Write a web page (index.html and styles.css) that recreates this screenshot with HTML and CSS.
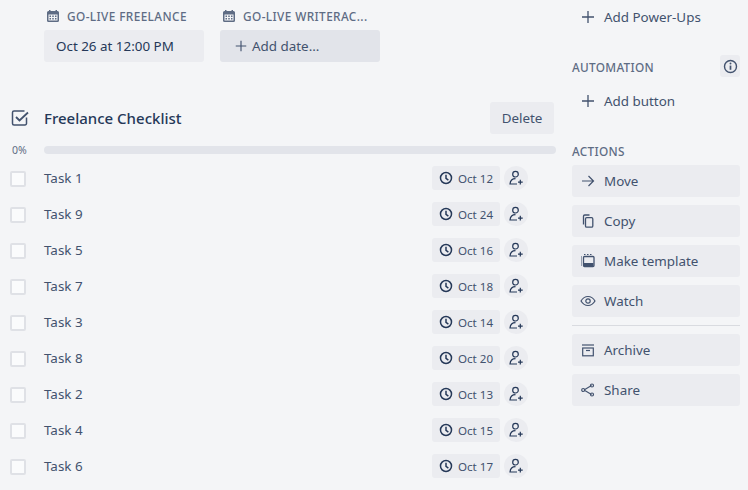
FILE: index.html
```html
<!DOCTYPE html>
<html lang="en">
<head>
<meta charset="utf-8">
<title>Card</title>
<link rel="stylesheet" href="styles.css">
</head>
<body>
<svg class="defs" width="0" height="0" aria-hidden="true">
  <symbol id="plus" viewBox="0 0 16 16"><path d="M8 2v12M2 8h12" fill="none" stroke="currentColor" stroke-width="1.3"/></symbol>
  <symbol id="cal" viewBox="0 0 14 14"><path fill="currentColor" fill-rule="evenodd" d="M3 1h1.500v1h5V1H11v1h.5A1.500 1.500 0 0 1 13 3.500v8a1.500 1.500 0 0 1-1.500 1.500h-9A1.500 1.500 0 0 1 1 11.500v-8A1.500 1.500 0 0 1 2.500 2H3zM2.500 5.500v6h9v-6zM3.500 6.500h1.500v1.500H3.500zM6.250 6.500h1.500v1.500h-1.500zM9 6.500h1.500v1.500H9zM3.500 9h1.500v1.500H3.500zM6.250 9h1.500v1.500h-1.500zM9 9h1.500v1.500H9z"/></symbol>
  <symbol id="clock" viewBox="0 0 16 16"><circle cx="8" cy="8" r="6.300" fill="none" stroke="currentColor" stroke-width="1.700"/><path d="M8 4.200v4.200l2.700 2" fill="none" stroke="currentColor" stroke-width="1.700"/></symbol>
  <symbol id="assign" viewBox="0 0 16 16"><path d="M10.300 4.200a2.800 2.800 0 1 1-5.600 0 2.800 2.800 0 0 1 5.600 0zM7.500 8.700c-3 0-5.200 2-5.500 5.300h7" fill="none" stroke="currentColor" stroke-width="1.200"/><path d="M12.300 9.800v4.700M10 12.200h4.700" fill="none" stroke="currentColor" stroke-width="1.200"/></symbol>
</svg>
<div class="page">
  <main class="main">
    <div class="dates">
      <div class="date-col">
        <div class="date-label"><svg class="cal"><use href="#cal"/></svg><span>GO-LIVE FREELANCE</span></div>
        <div class="date-btn">Oct 26 at 12:00 PM</div>
      </div>
      <div class="date-col">
        <div class="date-label"><svg class="cal"><use href="#cal"/></svg><span>GO-LIVE WRITERAC...</span></div>
        <div class="date-btn add"><svg class="plus-sm"><use href="#plus"/></svg>Add date...</div>
      </div>
    </div>

    <section class="checklist">
      <header class="cl-head">
        <svg class="cl-icon" viewBox="0 0 18 18"><path d="M15.500 8.500v6a1.500 1.500 0 0 1-1.500 1.500H3a1.500 1.500 0 0 1-1.500-1.500V3.500A1.500 1.500 0 0 1 3 2h10.500" fill="none" stroke="currentColor" stroke-width="1.500"/><path d="M5 8l3.500 3.500L17 3.500" fill="none" stroke="currentColor" stroke-width="1.800"/></svg>
        <h2 class="cl-title">Freelance Checklist</h2>
        <button class="delete">Delete</button>
      </header>
      <div class="progress"><span class="pct">0%</span><div class="bar"></div></div>
      <ul class="tasks">
        <li class="task"><span class="box"></span><span class="task-name">Task 1</span><span class="chip"><svg class="clock"><use href="#clock"/></svg>Oct 12</span><span class="assign"><svg class="assign-i"><use href="#assign"/></svg></span></li>
        <li class="task"><span class="box"></span><span class="task-name">Task 9</span><span class="chip"><svg class="clock"><use href="#clock"/></svg>Oct 24</span><span class="assign"><svg class="assign-i"><use href="#assign"/></svg></span></li>
        <li class="task"><span class="box"></span><span class="task-name">Task 5</span><span class="chip"><svg class="clock"><use href="#clock"/></svg>Oct 16</span><span class="assign"><svg class="assign-i"><use href="#assign"/></svg></span></li>
        <li class="task"><span class="box"></span><span class="task-name">Task 7</span><span class="chip"><svg class="clock"><use href="#clock"/></svg>Oct 18</span><span class="assign"><svg class="assign-i"><use href="#assign"/></svg></span></li>
        <li class="task"><span class="box"></span><span class="task-name">Task 3</span><span class="chip"><svg class="clock"><use href="#clock"/></svg>Oct 14</span><span class="assign"><svg class="assign-i"><use href="#assign"/></svg></span></li>
        <li class="task"><span class="box"></span><span class="task-name">Task 8</span><span class="chip"><svg class="clock"><use href="#clock"/></svg>Oct 20</span><span class="assign"><svg class="assign-i"><use href="#assign"/></svg></span></li>
        <li class="task"><span class="box"></span><span class="task-name">Task 2</span><span class="chip"><svg class="clock"><use href="#clock"/></svg>Oct 13</span><span class="assign"><svg class="assign-i"><use href="#assign"/></svg></span></li>
        <li class="task"><span class="box"></span><span class="task-name">Task 4</span><span class="chip"><svg class="clock"><use href="#clock"/></svg>Oct 15</span><span class="assign"><svg class="assign-i"><use href="#assign"/></svg></span></li>
        <li class="task"><span class="box"></span><span class="task-name">Task 6</span><span class="chip"><svg class="clock"><use href="#clock"/></svg>Oct 17</span><span class="assign"><svg class="assign-i"><use href="#assign"/></svg></span></li>
      </ul>
    </section>
  </main>

  <aside class="side">
    <div class="link first"><svg class="side-i"><use href="#plus"/></svg>Add Power-Ups</div>
    <div class="side-head auto"><span class="auto-text">AUTOMATION</span>
      <span class="info"><svg viewBox="0 0 16 16" width="15" height="15"><circle cx="8" cy="8" r="6.400" fill="none" stroke="currentColor" stroke-width="1.500"/><path d="M8 7v4.500" stroke="currentColor" stroke-width="1.800"/><circle cx="8" cy="4.800" r="1" fill="currentColor"/></svg></span>
    </div>
    <div class="link"><svg class="side-i"><use href="#plus"/></svg>Add button</div>
    <div class="side-head act"><span>ACTIONS</span></div>
    <div class="actions">
      <div class="btn"><svg class="side-i" viewBox="0 0 16 16"><path d="M2 8h11.500M8.500 3l5 5-5 5" fill="none" stroke="currentColor" stroke-width="1.200"/></svg>Move</div>
      <div class="btn"><svg class="side-i" viewBox="0 0 16 16"><rect x="5.500" y="4.700" width="7.300" height="9.500" rx="1.200" fill="none" stroke="currentColor" stroke-width="1.300"/><path d="M3.500 11.500V3.200A1.200 1.200 0 0 1 4.700 2H9.500" fill="none" stroke="currentColor" stroke-width="1.300"/></svg>Copy</div>
      <div class="btn"><svg class="side-i" viewBox="0 0 16 16"><rect x="3.500" y="3.500" width="10.500" height="10" rx="1" fill="none" stroke="currentColor" stroke-width="1.300"/><path d="M4 10h9.500v3H4z" fill="currentColor"/><path d="M1 4h1M1 6h1M1 8h1M1 10h1M1 12h1M4 1.500h1.500M7 1.500h1.500M10 1.500h1.500" stroke="currentColor" stroke-width="1.100"/></svg>Make template</div>
      <div class="btn"><svg class="side-i" viewBox="0 0 16 16"><path d="M1 8c1.800-3 4.200-4.500 7-4.500s5.200 1.500 7 4.500c-1.800 3-4.200 4.500-7 4.500S2.800 11 1 8z" fill="none" stroke="currentColor" stroke-width="1.200"/><circle cx="8" cy="8" r="2.200" fill="none" stroke="currentColor" stroke-width="1.200"/></svg>Watch</div>
      <hr class="rule">
      <div class="btn"><svg class="side-i" viewBox="0 0 16 16"><path d="M2 3h12" stroke="currentColor" stroke-width="1.200"/><rect x="2.700" y="6" width="10.600" height="7.800" fill="none" stroke="currentColor" stroke-width="1.200"/><path d="M6 8.500h4" stroke="currentColor" stroke-width="1.200"/></svg>Archive</div>
      <div class="btn"><svg class="side-i" viewBox="0 0 16 16"><path d="M4 8l7.500-4.500M4 8l7.500 4.500" stroke="currentColor" stroke-width="1.100"/><circle cx="3.200" cy="8" r="1.500" fill="none" stroke="currentColor" stroke-width="1.200"/><circle cx="12" cy="3.500" r="1.500" fill="none" stroke="currentColor" stroke-width="1.200"/><circle cx="12" cy="12.500" r="1.500" fill="none" stroke="currentColor" stroke-width="1.200"/></svg>Share</div>
    </div>
  </aside>
</div>
</body>
</html>
```
FILE: styles.css
```css
* { box-sizing: border-box; }
html, body { margin: 0; height: 100%; }
body {
  background: #f4f5f7;
  color: #42526e;
  font-family: "Noto Sans", "Open Sans", sans-serif;
  font-size: 13.4px;
  overflow: hidden;
}
.defs { position: absolute; }
.page { display: flex; width: 748px; height: 490px; overflow: hidden; }
.main { width: 572px; padding: 8px 16px 0 12px; flex: none; }
.side { width: 168px; flex: none; }

.dates { display: flex; gap: 16px; padding-left: 32px; height: 92px; }
.date-col { width: 160px; }
.date-label {
  display: flex; align-items: center; height: 16px; margin: 0 0 6px 0; padding-left: 2px;
  font-size: 11.800px; font-weight: 500; color: #5e6c84; letter-spacing: .4px; white-space: nowrap;
}
.cal { width: 14px; height: 14px; margin-right: 7px; flex: none; }
.date-btn {
  display: flex; align-items: center; height: 32px; padding-left: 12px;
  background: #ebecf0; border-radius: 3px; color: #253858; line-height: 32px;
}
.date-btn.add { background: #e2e4ea; color: #42526e; padding-left: 14px; }
.plus-sm { width: 14px; height: 14px; margin-right: 4px; color: #42526e; }

.checklist { display: block; }
.cl-head { display: flex; align-items: center; height: 32px; margin-top: 2px; }
.cl-icon { width: 18px; height: 18px; margin-left: -1px; margin-right: 15px; color: #42526e; flex: none; }
.cl-title { margin: 0; flex: 1; font-size: 15px; font-weight: 500; color: #253858; line-height: 32px; }
.delete {
  width: 64px; height: 32px; margin-right: 2px; padding: 0; border: 0; border-radius: 3px;
  background: #ebecf0; color: #42526e; font: inherit;
}
.progress { display: flex; align-items: center; height: 8px; margin-top: 12px; }
.pct { width: 32px; font-size: 10.500px; color: #5e6c84; }
.bar { flex: 1; height: 8px; background: #e2e4ea; border-radius: 4px; }

.tasks { list-style: none; margin: 6px 0 0; padding: 0; }
.task { display: flex; align-items: center; height: 36px; padding-right: 28px; }
.box {
  width: 16px; height: 16px; margin-left: -2px; margin-right: 18px; margin-top: 2px; flex: none;
  background: #fafbfc; border: 2px solid #dfe1e6; border-radius: 2px;
}
.task-name { flex: 1; color: #42526e; }
.chip {
  display: flex; align-items: center; width: 68px; height: 24px; padding-left: 7px;
  background: #ebecf0; border-radius: 3px; font-size: 11.600px; color: #42526e;
}
.clock { width: 14px; height: 14px; margin-right: 5px; color: #253858; flex: none; }
.assign {
  display: flex; align-items: center; justify-content: center;
  width: 24px; height: 24px; margin-left: 4px; border-radius: 50%; background: #ebecf0;
}
.assign-i { width: 16px; height: 16px; color: #253858; }

.link { display: flex; align-items: center; height: 32px; padding-left: 8px; padding-bottom: 1px; color: #42526e; }
.side-i { width: 16px; height: 16px; margin-right: 8px; flex: none; color: #42526e; }
.side-head {
  display: flex; align-items: center; justify-content: space-between;
  font-size: 11.800px; font-weight: 500; letter-spacing: .3px; color: #5e6c84;
}
.first { margin-top: 1px; }
.auto { height: 22px; margin-top: 22px; margin-bottom: 8px; }
.auto-text { padding-top: 2px; }
.act { height: 16px; margin-top: 26px; margin-bottom: 6px; }
.info {
  display: flex; align-items: center; justify-content: center;
  width: 20px; height: 22px; background: #ebecf0; border-radius: 3px; color: #42526e;
}
.actions { display: flex; flex-direction: column; gap: 8px; }
.btn {
  display: flex; align-items: center; height: 32px; padding-left: 8px; padding-bottom: 1px;
  background: #ebecf0; border-radius: 3px; color: #42526e;
}
.rule { width: 100%; height: 1px; margin: 0; border: 0; background: #d9dbe0; }
```
